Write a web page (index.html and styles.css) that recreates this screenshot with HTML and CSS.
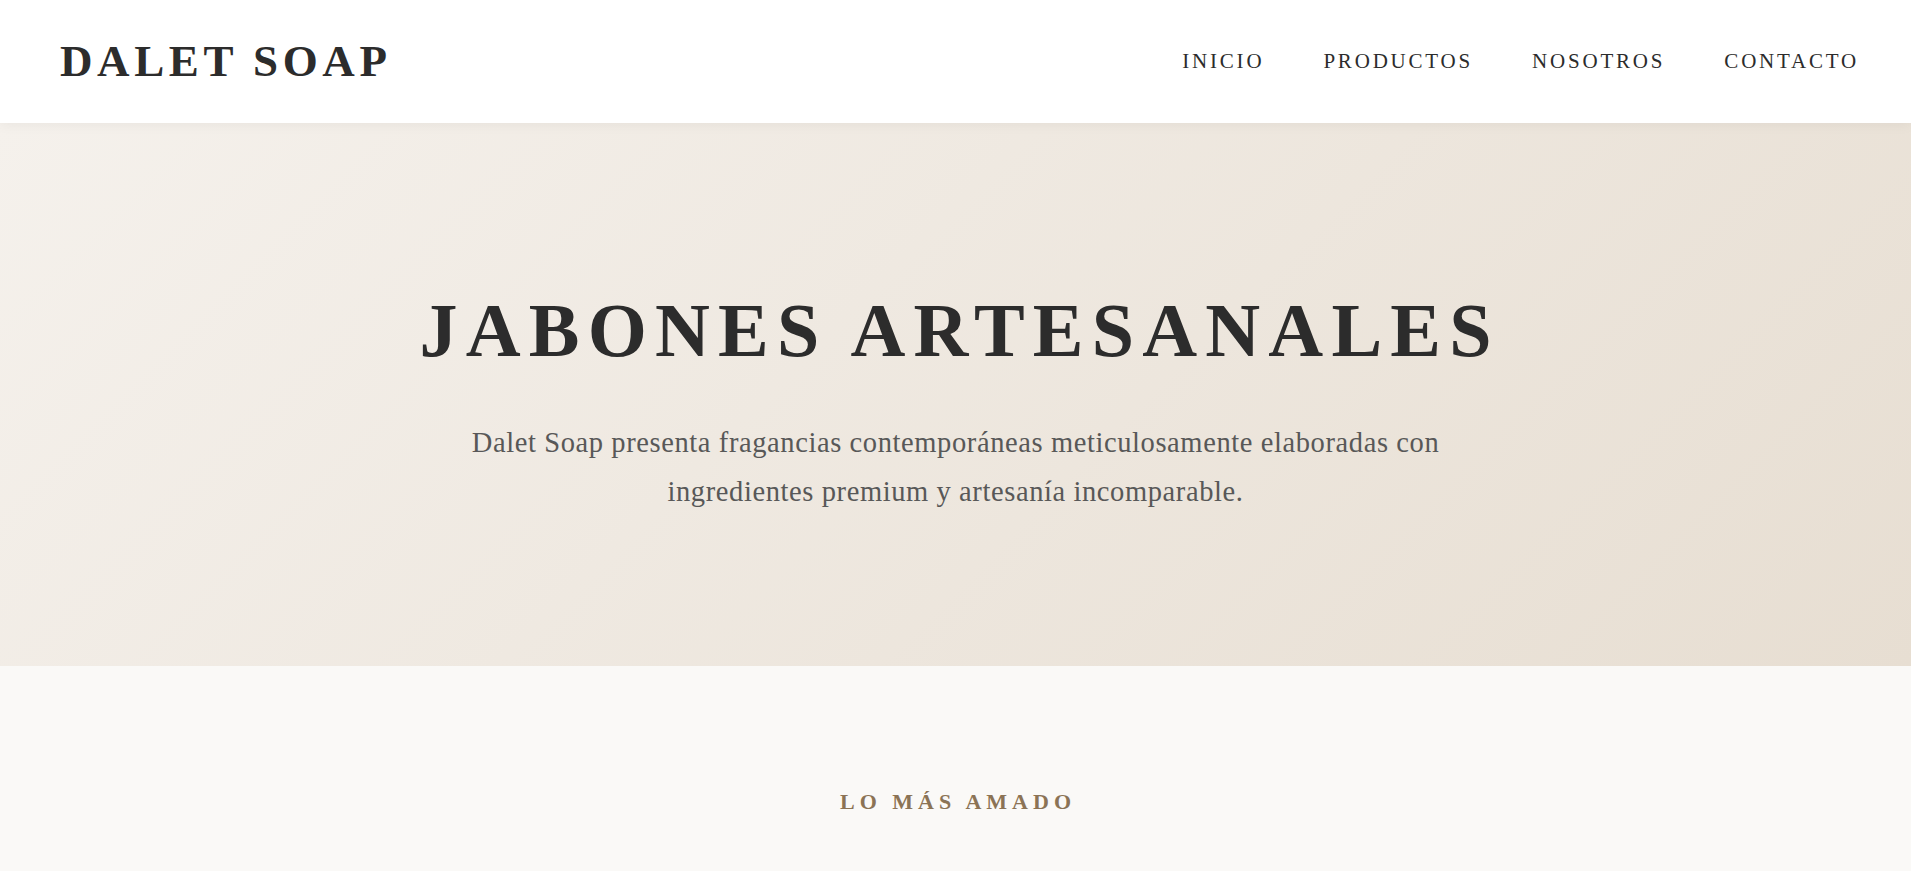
FILE: index.html
```html
<!DOCTYPE html>
<html lang="es">
<head>
<meta charset="utf-8">
<title>Dalet Soap</title>
<link rel="stylesheet" href="styles.css">
</head>
<body>
<header class="site-header">
  <a class="logo" href="#">DALET SOAP</a>
  <nav class="main-nav">
    <a href="#">INICIO</a>
    <a href="#">PRODUCTOS</a>
    <a href="#">NOSOTROS</a>
    <a href="#">CONTACTO</a>
  </nav>
</header>
<section class="hero">
  <h1 class="hero-title">JABONES ARTESANALES</h1>
  <p class="hero-text">Dalet Soap presenta fragancias contemporáneas meticulosamente elaboradas con ingredientes premium y artesanía incomparable.</p>
</section>
<section class="featured">
  <h2 class="section-label">LO MÁS AMADO</h2>
</section>
</body>
</html>
```
FILE: styles.css
```css
* { box-sizing: border-box; }
html, body { margin: 0; padding: 0; }
body {
  font-family: "Liberation Serif", "Times New Roman", serif;
  color: #2c2c2c;
  background: #faf9f7;
  overflow: hidden;
}
a { color: inherit; text-decoration: none; }

.site-header {
  height: 123px;
  background: #ffffff;
  display: flex;
  align-items: center;
  justify-content: space-between;
  padding: 0 52px 0 60px;
  box-shadow: 0 2px 12px rgba(0, 0, 0, 0.05);
  position: relative;
  z-index: 2;
}
.logo {
  font-size: 45px;
  font-weight: 700;
  letter-spacing: 4.6px;
  color: #2c2c2c;
  line-height: 1;
}
.main-nav {
  display: flex;
  gap: 59px;
}
.main-nav a {
  font-size: 21px;
  letter-spacing: 2.8px;
  color: #2c2c2c;
  line-height: 1;
}

.hero {
  height: 543px;
  background: linear-gradient(135deg, #f5f1ec 0%, #e7ded2 100%);
  padding: 162px 20px 0;
  display: flex;
  flex-direction: column;
  align-items: center;
  text-align: center;
}
.hero-title {
  margin: 0;
  font-size: 76px;
  line-height: 1.2;
  font-weight: 700;
  letter-spacing: 8.2px;
  padding-left: 8.2px;
  color: #2c2c2c;
}
.hero-text {
  margin: 42px 0 0;
  max-width: 1070px;
  font-size: 28.5px;
  letter-spacing: 0.6px;
  line-height: 49px;
  color: #585858;
}

.featured {
  padding-top: 123px;
  text-align: center;
  background: #faf9f7;
}
.section-label {
  margin: 0;
  font-size: 22px;
  line-height: 1.2;
  font-weight: 700;
  letter-spacing: 5px;
  padding-left: 5px;
  color: #8b7355;
}
```
